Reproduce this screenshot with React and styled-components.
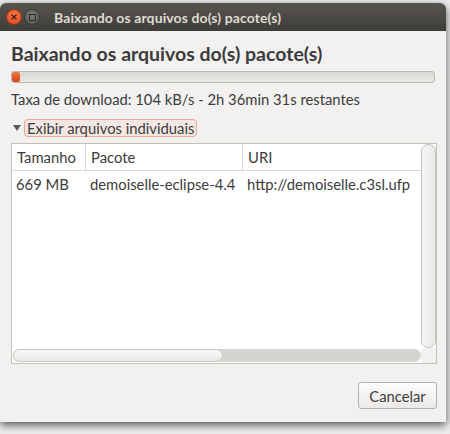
import React from 'react';
import styled, { createGlobalStyle } from 'styled-components';

const GlobalStyle = createGlobalStyle`
  html, body {
    margin: 0;
    padding: 0;
    background: #ececec;
    font-family: "Lato", "Open Sans", sans-serif;
  }
`;

const Screen = styled.div`
  width: 450px;
  height: 434px;
  padding-top: 3px;
  box-sizing: border-box;
  overflow: hidden;
`;

const Window = styled.div`
  width: 446px;
  height: 419px;
  border-radius: 6px 6px 0 0;
  background: #f2f1f0;
  box-shadow: 0 3px 9px rgba(0, 0, 0, 0.65);
  display: flex;
  flex-direction: column;
`;

const TitleBar = styled.div`
  height: 28px;
  flex: none;
  border-radius: 6px 6px 0 0;
  background: linear-gradient(#58554f, #3e3d39);
  display: flex;
  align-items: center;
  padding-left: 6px;
  gap: 2px;
`;

const WinButton = styled.div`
  width: 16px;
  height: 16px;
  border-radius: 50%;
  box-sizing: border-box;
  display: flex;
  align-items: center;
  justify-content: center;
  background: ${(p) =>
    p.$close
      ? 'radial-gradient(circle at 50% 35%, #f7774a, #d9461c)'
      : 'radial-gradient(circle at 50% 35%, #7a7873, #55534e)'};
  border: 1px solid ${(p) => (p.$close ? '#9e3414' : '#3a3935')};
`;

const WindowTitle = styled.span`
  margin-left: 12px;
  color: #dfdbd2;
  font-size: 14px;
  font-weight: 700;
  letter-spacing: 0.1px;
`;

const Body = styled.div`
  flex: 1;
  display: flex;
  flex-direction: column;
  padding: 0 9px 0 11px;
  color: #3c3c3c;
`;

const Heading = styled.h1`
  margin: 11px 0 0;
  font-size: 19.5px;
  line-height: 24px;
  font-weight: 700;
  color: #3c3c3c;
`;

const Progress = styled.div`
  margin: 5px 2px 0 0;
  height: 10px;
  border: 1px solid #b9b7b3;
  border-radius: 3px;
  background: linear-gradient(#dcdad6, #e9e8e5);
  overflow: hidden;
`;

const ProgressFill = styled.div`
  height: 100%;
  background: linear-gradient(#f0763f, #d5461a);
  border-radius: 2px;
`;

const Rate = styled.div`
  margin-top: 6px;
  font-size: 14.8px;
  line-height: 20px;
`;

const Expander = styled.div`
  margin-top: 10px;
  display: flex;
  align-items: center;
  gap: 3px;
`;

const Arrow = styled.span`
  width: 0;
  height: 0;
  border-left: 4px solid transparent;
  border-right: 4px solid transparent;
  border-top: 6px solid #5d5c58;
  margin: 0 0 0 2px;
`;

const ExpanderLabel = styled.span`
  font-size: 14.8px;
  line-height: 16px;
  padding: 0 2px;
  border: 1px solid #eba996;
  border-radius: 4px;
  background: #f3e7e3;
`;

const Tree = styled.div`
  margin-top: 6px;
  height: 219px;
  border: 1px solid #c3c0bb;
  background: #fff;
  display: grid;
  grid-template-columns: 1fr 15px;
  grid-template-rows: 1fr 15px;
  font-size: 14.8px;
`;

const Table = styled.div`
  overflow: hidden;
`;

const Row = styled.div`
  display: grid;
  grid-template-columns: 74px 157px 180px;
  height: 26px;
  align-items: center;
  white-space: nowrap;
  border-bottom: ${(p) => (p.$header ? '1px solid #dddbd7' : 'none')};
`;

const Cell = styled.div`
  padding-left: ${(p) => (p.$header ? 5 : 4)}px;
  height: 100%;
  display: flex;
  align-items: center;
  overflow: hidden;
  border-right: ${(p) => (p.$sep ? '1px solid #dddbd7' : 'none')};
`;

const VScroll = styled.div`
  border: 1px solid #c6c4bf;
  border-radius: 7px;
  background: linear-gradient(to right, #f6f6f5, #e9e8e6);
`;

const HTrough = styled.div`
  margin: 1px 0 1px 1px;
  border-radius: 7px;
  background: #d6d4d0;
  display: flex;
`;

const HThumb = styled.div`
  width: 210px;
  box-sizing: border-box;
  border: 1px solid #c9c7c2;
  border-radius: 7px;
  background: linear-gradient(#f8f8f7, #ebeae8);
`;

const Corner = styled.div`
  background: #f2f1f0;
`;

const Footer = styled.div`
  display: flex;
  justify-content: flex-end;
  margin-top: 18px;
`;

const Button = styled.button`
  width: 79px;
  height: 27px;
  border: 1px solid #b4b2ae;
  border-radius: 3px;
  background: linear-gradient(#fcfcfc, #eae9e7);
  color: #3c3c3c;
  font-family: inherit;
  font-size: 14.8px;
  padding: 0;
`;

const App = () => (
  <Screen>
    <GlobalStyle />
    <Window>
      <TitleBar>
        <WinButton $close>
          <svg width="6" height="6" viewBox="0 0 6 6">
            <path d="M0.5 0.5L5.5 5.5M5.5 0.5L0.5 5.5" stroke="#4a1a0a" strokeWidth="1.2" />
          </svg>
        </WinButton>
        <WinButton>
          <svg width="7" height="7" viewBox="0 0 7 7">
            <rect x="0.5" y="0.5" width="6" height="6" fill="none" stroke="#2e2d2a" strokeWidth="1" />
          </svg>
        </WinButton>
        <WindowTitle>Baixando os arquivos do(s) pacote(s)</WindowTitle>
      </TitleBar>
      <Body>
        <Heading>Baixando os arquivos do(s) pacote(s)</Heading>
        <Progress>
          <ProgressFill style={{ width: '2%' }} />
        </Progress>
        <Rate>Taxa de download: 104 kB/s - 2h 36min 31s restantes</Rate>
        <Expander>
          <Arrow />
          <ExpanderLabel>Exibir arquivos individuais</ExpanderLabel>
        </Expander>
        <Tree>
          <Table>
            <Row $header>
              <Cell $header $sep>Tamanho</Cell>
              <Cell $header $sep>Pacote</Cell>
              <Cell $header>URI</Cell>
            </Row>
            <Row>
              <Cell>669 MB</Cell>
              <Cell>demoiselle-eclipse-4.4</Cell>
              <Cell>http://demoiselle.c3sl.ufp</Cell>
            </Row>
          </Table>
          <VScroll />
          <HTrough>
            <HThumb />
          </HTrough>
          <Corner />
        </Tree>
        <Footer>
          <Button>Cancelar</Button>
        </Footer>
      </Body>
    </Window>
  </Screen>
);

export default App;
